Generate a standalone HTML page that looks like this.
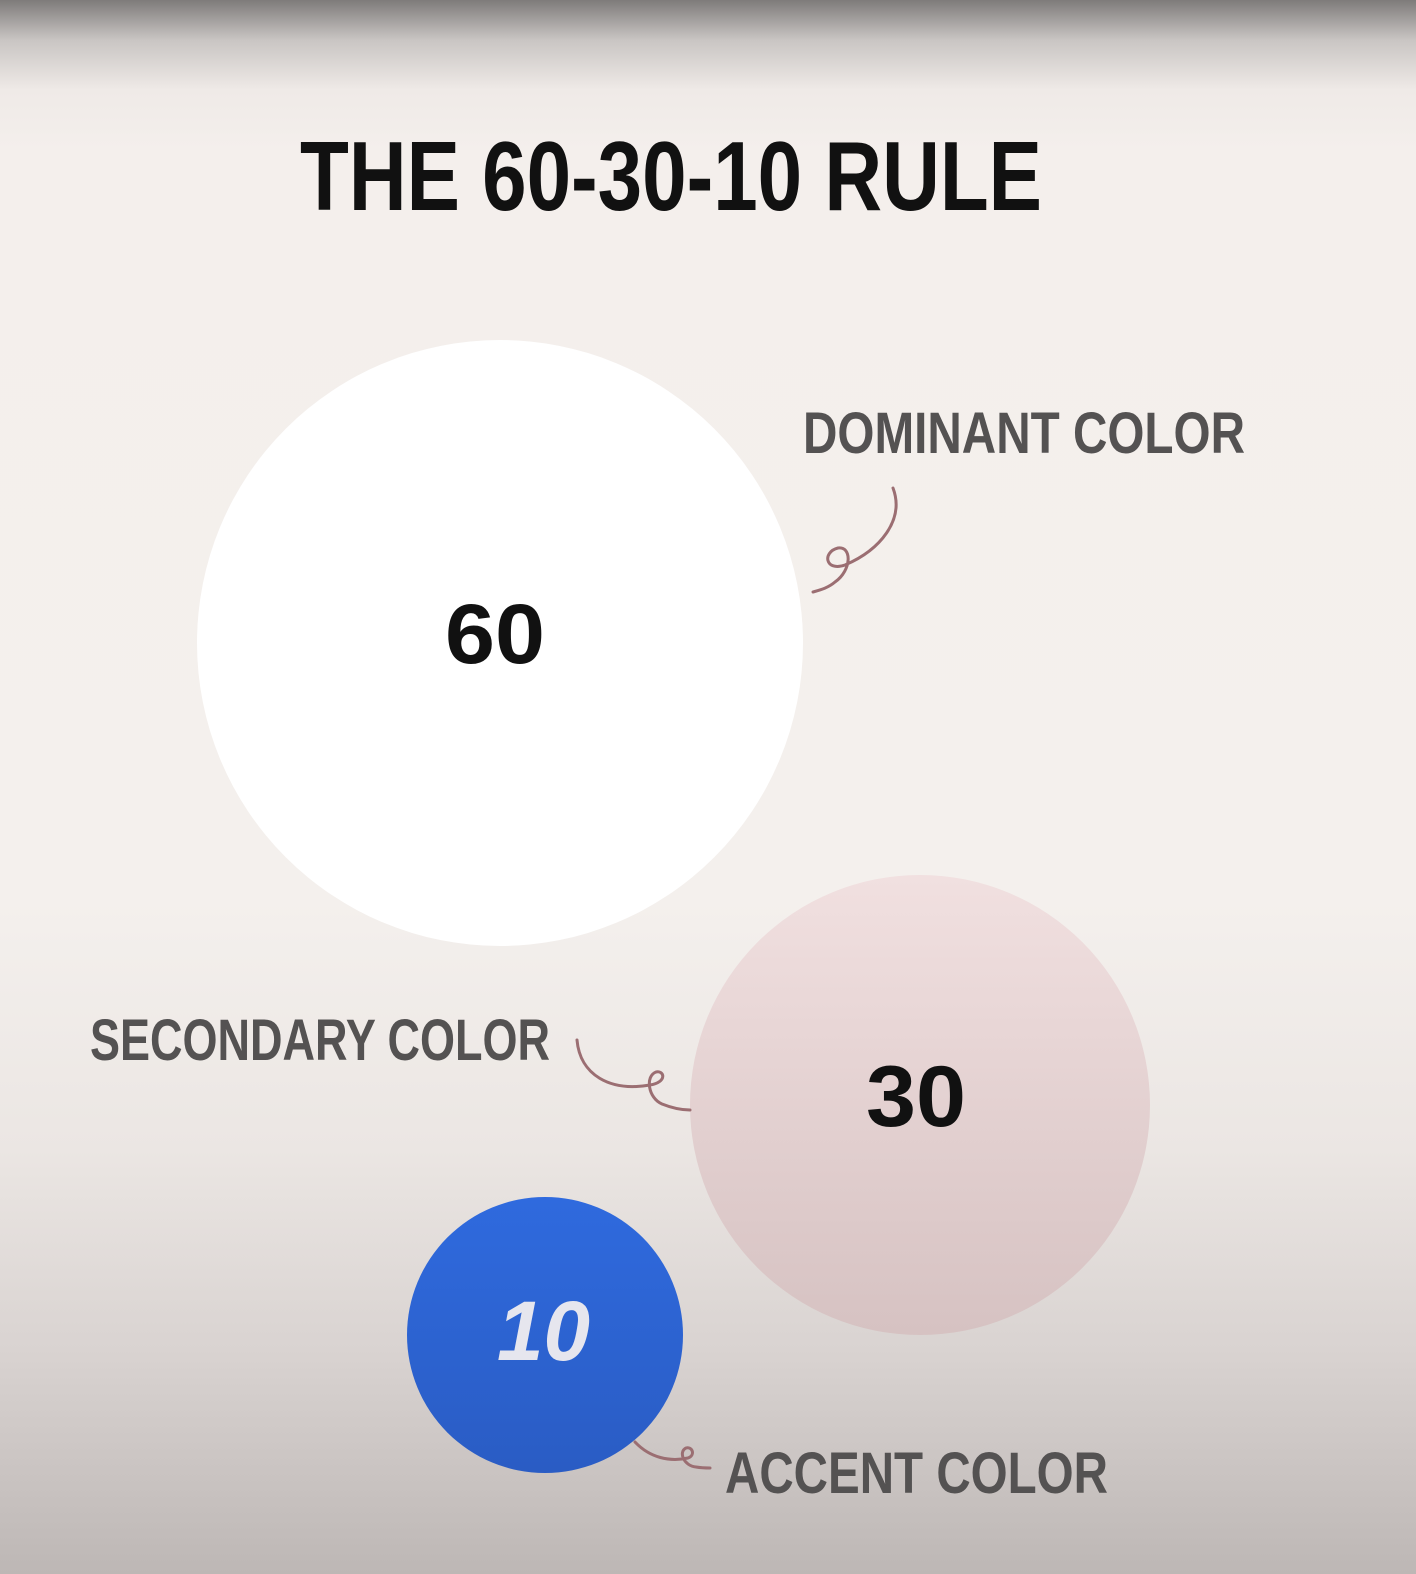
<!DOCTYPE html>
<html><head><meta charset="utf-8"><style>
html,body{margin:0;padding:0}
body{width:1416px;height:1574px;overflow:hidden;background:linear-gradient(to bottom,#7e7b7a 0px,#c9c5c3 40px,#efeae7 90px,#f4efec 150px,#f4f0ed 900px,#ebe6e3 1150px,#d9d3d1 1350px,#bdb7b5 1574px)}
</style></head><body>
<svg width="1416" height="1574" viewBox="0 0 1416 1574" xmlns="http://www.w3.org/2000/svg" style="position:absolute;left:0;top:0">
<defs>
<linearGradient id="pk" x1="0" y1="0" x2="0" y2="1"><stop offset="0" stop-color="#f1e0e0"/><stop offset="1" stop-color="#d6c2c2"/></linearGradient>
<linearGradient id="bl" x1="0" y1="0" x2="0" y2="1"><stop offset="0" stop-color="#2f6ade"/><stop offset="1" stop-color="#2a5cc4"/></linearGradient>
</defs>
<text x="300" y="210" textLength="742" lengthAdjust="spacingAndGlyphs" font-family="Liberation Sans, sans-serif" font-weight="bold" font-size="98" fill="#111">THE 60-30-10 RULE</text>
<circle cx="500" cy="643" r="303" fill="#ffffff"/>
<circle cx="920" cy="1105" r="230" fill="url(#pk)"/>
<circle cx="545" cy="1335" r="138" fill="url(#bl)"/>
<text x="445" y="663" textLength="100" lengthAdjust="spacingAndGlyphs" font-family="Liberation Sans, sans-serif" font-weight="bold" font-size="84" fill="#111">60</text>
<text x="866" y="1126" textLength="100" lengthAdjust="spacingAndGlyphs" font-family="Liberation Sans, sans-serif" font-weight="bold" font-size="86" fill="#111">30</text>
<text x="497" y="1360" textLength="93" lengthAdjust="spacingAndGlyphs" font-family="Liberation Sans, sans-serif" font-weight="bold" font-style="italic" font-size="84" fill="#e6e6ee">10</text>
<g font-family="Liberation Sans, sans-serif" font-weight="bold" font-size="58" fill="#545252">
<text x="803" y="453" textLength="442" lengthAdjust="spacingAndGlyphs">DOMINANT COLOR</text>
<text x="90" y="1060" textLength="460" lengthAdjust="spacingAndGlyphs">SECONDARY COLOR</text>
<text x="725" y="1493" textLength="383" lengthAdjust="spacingAndGlyphs">ACCENT COLOR</text>
</g>
<g fill="none" stroke="#9b6e72" stroke-width="3" stroke-linecap="round">
<path d="M893 488 C905 520 880 550 845 565 C825 572 822 552 838 548 C852 546 852 570 835 582 C828 588 820 590 813 592"/>
<path d="M577 1040 C580 1075 610 1092 650 1085 C668 1082 664 1070 656 1072 C645 1076 648 1098 662 1104 C672 1108 682 1110 690 1110"/>
<path d="M635 1442 C650 1458 670 1462 688 1458 C696 1455 692 1446 686 1448 C678 1452 684 1466 696 1467 C702 1468 706 1468 710 1468"/>
</g>
</svg>
</body></html>
